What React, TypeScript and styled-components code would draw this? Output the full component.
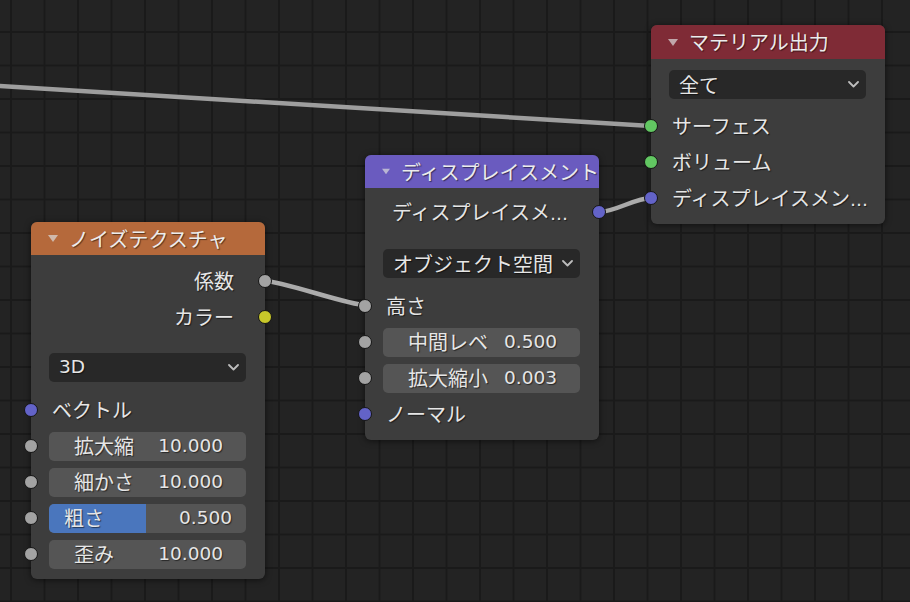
import React from 'react';
import styled, { createGlobalStyle } from 'styled-components';

const GlobalStyle = createGlobalStyle`
  html, body { margin: 0; padding: 0; background: #232323; }
  body { font-family: "Noto Sans CJK JP", "DejaVu Sans", sans-serif; }
`;

const Canvas = styled.div`
  position: relative;
  width: 910px;
  height: 602px;
  overflow: hidden;
  background-color: #232323;
  background-image:
    linear-gradient(to right, #1a1a1a 0, #1a1a1a 2px, transparent 2px),
    linear-gradient(to bottom, #1a1a1a 0, #1a1a1a 2px, transparent 2px);
  background-size: 33.5px 33.5px;
  background-position: 10px -2.5px;
`;

const Links = styled.svg`
  position: absolute;
  inset: 0;
  width: 910px;
  height: 602px;
  pointer-events: none;
`;

const NodeBox = styled.div<{ $x: number; $y: number }>`
  position: absolute;
  left: ${(p) => p.$x}px;
  top: ${(p) => p.$y}px;
  width: 234px;
  background: #3d3d3d;
  border-radius: 6px;
  box-shadow: 0 1px 6px rgba(0, 0, 0, 0.55);
`;

const Header = styled.div<{ $color: string; $h: number }>`
  height: ${(p) => p.$h}px;
  background: ${(p) => p.$color};
  border-radius: 6px 6px 0 0;
  display: flex;
  align-items: center;
  gap: 11px;
  padding-left: 17px;
  color: #ececec;
  font-family: "Noto Sans CJK JP", sans-serif;
  font-size: 20px;
  line-height: 1;
  white-space: nowrap;
  overflow: hidden;
  text-shadow: 1px 1px 1px rgba(0, 0, 0, 0.5);
`;

const Body = styled.div<{ $pb: number }>`
  display: flex;
  flex-direction: column;
  padding-bottom: ${(p) => p.$pb}px;
`;

const Row = styled.div<{ $kind: 'in' | 'out' | 'field'; $mt?: number }>`
  position: relative;
  height: 36px;
  margin-top: ${(p) => p.$mt ?? 0}px;
  display: flex;
  align-items: center;
  justify-content: ${(p) => (p.$kind === 'out' ? 'flex-end' : 'flex-start')};
  padding: ${(p) =>
    p.$kind === 'out' ? '0 31px 0 0' : p.$kind === 'in' ? '0 0 0 21px' : '0 19px 0 18px'};
`;

const Label = styled.span`
  font-family: "Noto Sans CJK JP", sans-serif;
  font-size: 20px;
  line-height: 1;
  color: #e6e6e6;
  white-space: nowrap;
  text-shadow: 1px 1px 1px rgba(0, 0, 0, 0.55);
  position: relative;
`;

const Dots = styled.span`
  font-family: "DejaVu Sans", sans-serif;
  font-size: 18px;
`;

const Value = styled.span`
  font-family: "DejaVu Sans", sans-serif;
  font-size: 18.5px;
  line-height: 1;
  color: #e6e6e6;
  white-space: nowrap;
  text-shadow: 1px 1px 1px rgba(0, 0, 0, 0.55);
  position: relative;
`;

const Socket = styled.span<{ $color: string; $side: 'left' | 'right' }>`
  position: absolute;
  top: 50%;
  ${(p) => p.$side}: -7px;
  width: 14px;
  height: 14px;
  margin-top: -7px;
  box-sizing: border-box;
  border-radius: 50%;
  background: ${(p) => p.$color};
  border: 1px solid #151515;
`;

const Dropdown = styled.div<{ $mt: number }>`
  margin: ${(p) => p.$mt}px 19px 0 18px;
  height: 29px;
  border-radius: 5px;
  background: #282828;
  display: flex;
  align-items: center;
  justify-content: space-between;
  padding: 0 7px 0 10px;
`;

const Field = styled.div<{ $slider?: boolean }>`
  position: relative;
  flex: 1;
  height: 29px;
  border-radius: 5px;
  background: #555555;
  overflow: hidden;
  display: flex;
  align-items: center;
  justify-content: space-between;
  padding: ${(p) => (p.$slider ? '0 14px 0 15px' : '0 23px 0 25px')};
`;

const SliderFill = styled.div`
  position: absolute;
  left: 0;
  top: 0;
  bottom: 0;
  background: #4a76bd;
`;

const Triangle = () => (
  <svg width="10" height="7" viewBox="0 0 10 7">
    <path d="M0 0 L10 0 L5 7 Z" fill="rgba(220,220,220,0.7)" />
  </svg>
);

const Chevron = () => (
  <svg width="11" height="7" viewBox="0 0 11 7">
    <path d="M1 1 L5.5 5.5 L10 1" fill="none" stroke="#bdbdbd" strokeWidth="1.8" strokeLinecap="round" strokeLinejoin="round" />
  </svg>
);

const GRAY = '#a3a3a3';
const YELLOW = '#c8c82a';
const GREEN = '#62c762';
const BLUE = '#6363c8';

type FieldProps = { label: string; value: string; fill?: number };
const NumField = ({ label, value, fill }: FieldProps) => (
  <Row $kind="field">
    <Socket $color={GRAY} $side="left" />
    <Field $slider={fill !== undefined}>
      {fill !== undefined && <SliderFill style={{ width: `${fill * 100}%` }} />}
      <Label>{label}</Label>
      <Value>{value}</Value>
    </Field>
  </Row>
);

export default function App() {
  return (
    <>
      <GlobalStyle />
      <Canvas>
        <Links viewBox="0 0 910 602">
          <path d="M -10 85.4 L 651 126" stroke="#9e9e9e" strokeWidth="4.5" fill="none" />
          <path d="M 599 212 C 615 212, 635 198, 651 198" stroke="#ababab" strokeWidth="4.5" fill="none" />
          <path d="M 265 281 C 282 281, 348 305, 365 305" stroke="#ababab" strokeWidth="4.5" fill="none" />
        </Links>

        <NodeBox $x={651} $y={25}>
          <Header $color="#7f2b36" $h={34}>
            <Triangle />
            <span>マテリアル出力</span>
          </Header>
          <Body $pb={8}>
            <Dropdown $mt={11}>
              <Label>全て</Label>
              <Chevron />
            </Dropdown>
            <Row $kind="in" $mt={9}>
              <Socket $color={GREEN} $side="left" />
              <Label>サーフェス</Label>
            </Row>
            <Row $kind="in">
              <Socket $color={GREEN} $side="left" />
              <Label>ボリューム</Label>
            </Row>
            <Row $kind="in">
              <Socket $color={BLUE} $side="left" />
              <Label>
                ディスプレイスメン<Dots>…</Dots>
              </Label>
            </Row>
          </Body>
        </NodeBox>

        <NodeBox $x={365} $y={155}>
          <Header $color="#6a5bbf" $h={33}>
            <Triangle />
            <span>ディスプレイスメント</span>
          </Header>
          <Body $pb={8}>
            <Row $kind="out" $mt={6}>
              <Label>
                ディスプレイスメ<Dots>…</Dots>
              </Label>
              <Socket $color={BLUE} $side="right" />
            </Row>
            <Dropdown $mt={19}>
              <Label>オブジェクト空間</Label>
              <Chevron />
            </Dropdown>
            <Row $kind="in" $mt={10}>
              <Socket $color={GRAY} $side="left" />
              <Label>高さ</Label>
            </Row>
            <NumField label="中間レベ" value="0.500" />
            <NumField label="拡大縮小" value="0.003" />
            <Row $kind="in">
              <Socket $color={BLUE} $side="left" />
              <Label>ノーマル</Label>
            </Row>
          </Body>
        </NodeBox>

        <NodeBox $x={31} $y={222}>
          <Header $color="#b5693b" $h={33}>
            <Triangle />
            <span>ノイズテクスチャ</span>
          </Header>
          <Body $pb={7}>
            <Row $kind="out" $mt={8}>
              <Label>係数</Label>
              <Socket $color={GRAY} $side="right" />
            </Row>
            <Row $kind="out">
              <Label>カラー</Label>
              <Socket $color={YELLOW} $side="right" />
            </Row>
            <Dropdown $mt={18}>
              <Value>3D</Value>
              <Chevron />
            </Dropdown>
            <Row $kind="in" $mt={10}>
              <Socket $color={BLUE} $side="left" />
              <Label>ベクトル</Label>
            </Row>
            <NumField label="拡大縮" value="10.000" />
            <NumField label="細かさ" value="10.000" />
            <NumField label="粗さ" value="0.500" fill={0.49} />
            <NumField label="歪み" value="10.000" />
          </Body>
        </NodeBox>
      </Canvas>
    </>
  );
}
